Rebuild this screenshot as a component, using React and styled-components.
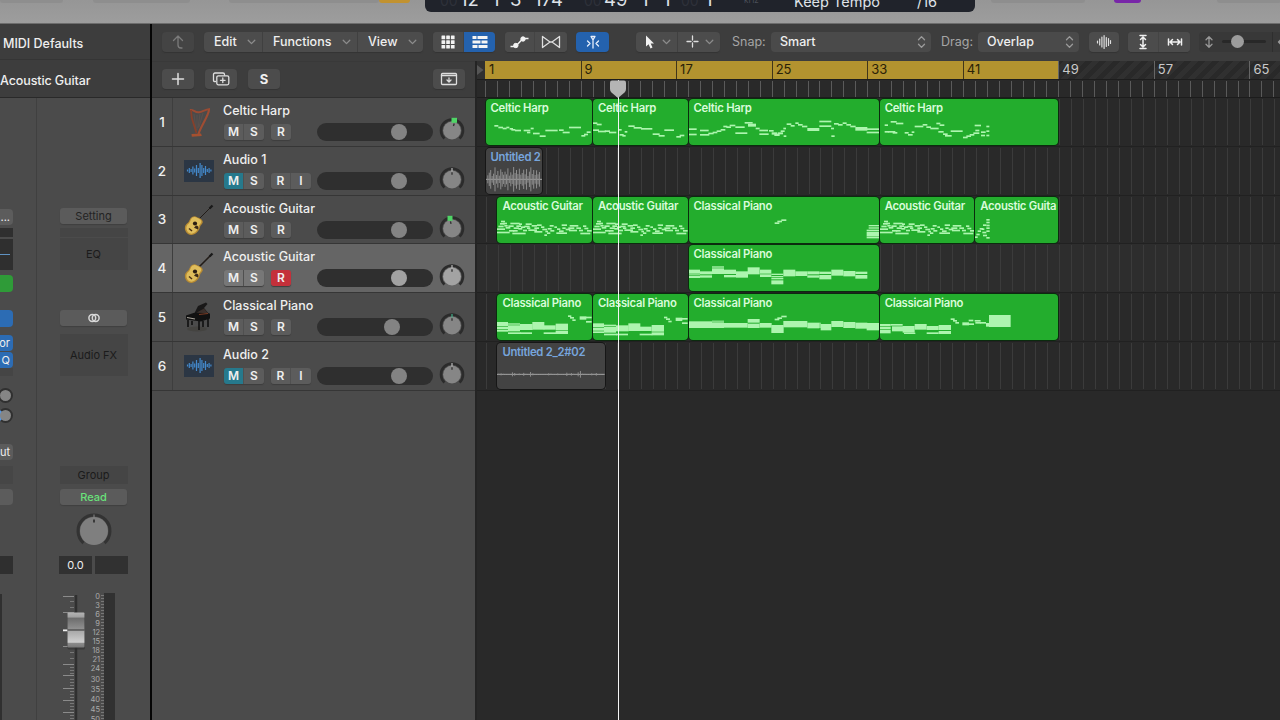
import React from "react";
import styled, { createGlobalStyle, css } from "styled-components";

const BAR = 11.945;
const LANE = 48.8;

/* note lists: [x, y, width, height], in thirds of a pixel */
const harpA = [
  [25, 78, 12], [37, 83, 14], [50, 86, 12], [61, 83, 9], [71, 87, 10], [76, 90, 12], [87, 92, 18],
  [113, 92, 20], [123, 98, 10], [134, 86, 9], [141, 101, 20], [161, 109, 18], [178, 92, 37],
  [219, 91, 14], [230, 98, 21], [249, 83, 36], [286, 108, 12], [294, 104, 12], [302, 97, 12],
];
const harpB = [
  [0, 70, 13], [11, 74, 15], [0, 91, 18], [15, 95, 24], [35, 94, 16], [48, 98, 22], [80, 105, 12],
  [88, 108, 10], [95, 96, 8], [106, 79, 19], [122, 84, 24], [144, 87, 34], [179, 103, 21],
  [197, 108, 18], [214, 91, 29], [250, 111, 14], [260, 107, 14], [78, 90, 8],
];
const harpC = [
  [0, 88, 23], [0, 104, 23], [33, 92, 26], [33, 105, 28], [58, 101, 16], [71, 98, 14], [83, 94, 14],
  [95, 90, 14], [103, 80, 12], [112, 82, 14], [122, 77, 17], [139, 82, 28], [139, 100, 36],
  [167, 69, 24], [177, 74, 24, 9], [200, 86, 12], [211, 92, 26], [211, 103, 28], [240, 93, 14],
  [248, 100, 16, 7], [256, 104, 16, 7], [266, 100, 16, 6], [275, 94, 12], [283, 86, 8], [284, 109, 8],
  [293, 73, 14], [305, 78, 12], [319, 70, 10], [327, 75, 14], [339, 80, 16], [355, 87, 36, 9],
  [391, 65, 36], [391, 79, 36], [426, 86, 9], [427, 109, 10], [435, 72, 14], [447, 75, 14],
  [461, 70, 12], [472, 75, 14], [484, 80, 16], [499, 84, 36, 11], [533, 88, 38], [533, 98, 38],
];
const harpD = [
  [14, 76, 10], [14, 96, 12], [32, 66, 18], [48, 71, 22], [24, 96, 22], [38, 99, 14], [74, 99, 12],
  [84, 105, 14], [95, 97, 8], [104, 80, 26], [128, 75, 14], [139, 82, 14], [151, 86, 25],
  [169, 71, 12], [179, 76, 14], [175, 96, 16], [189, 103, 14], [195, 108, 20], [212, 94, 36],
  [249, 113, 14], [259, 109, 14], [269, 105, 14], [280, 100, 18], [284, 77, 19], [286, 92, 12],
  [303, 97, 14], [303, 107, 12], [319, 80, 9], [319, 94, 9], [319, 107, 9],
];
const guitarA = [
  [0, 104, 38], [46, 107, 40], [0, 94, 24], [12, 71, 12], [9, 78, 14], [18, 77, 12], [4, 86, 16],
  [22, 84, 10], [26, 90, 14], [40, 77, 28], [34, 85, 16], [36, 99, 16], [50, 91, 16], [66, 79, 9],
  [58, 85, 14], [48, 99, 14], [64, 93, 12], [72, 88, 12], [78, 98, 12], [86, 79, 18], [82, 86, 16],
  [90, 91, 10], [104, 84, 16], [94, 97, 26], [112, 91, 14], [112, 102, 24], [120, 82, 14],
  [132, 88, 10], [136, 95, 14], [145, 101, 8], [142, 112, 8], [152, 93, 12], [150, 106, 10],
  [158, 84, 12], [160, 99, 12], [172, 88, 8], [180, 94, 10], [178, 106, 32], [186, 100, 14],
  [194, 82, 16], [196, 91, 10], [206, 95, 14], [218, 84, 16], [214, 91, 18], [216, 98, 24],
  [234, 84, 10], [238, 91, 14], [246, 98, 12], [250, 107, 30], [258, 85, 10], [262, 92, 12], [270, 99, 14],
];
const guitarB = [
  [34, 66, 10], [34, 74, 10], [34, 83, 10], [34, 91, 10], [34, 100, 10], [24, 82, 10], [14, 93, 10],
  [8, 100, 10], [4, 110, 10], [0, 118, 8], [22, 104, 12], [24, 113, 12], [34, 120, 10], [20, 94, 8],
];
const pianoTail = [
  [257, 76, 14], [265, 71, 14], [277, 67, 15],
  [539, 84, 32, 4], [539, 91, 32, 4], [533, 98, 38, 4], [533, 104, 38, 14], [533, 119, 38, 5],
];
const pianoA = [
  [0, 84, 33, 12], [0, 98, 33, 8], [0, 108, 33, 5], [33, 88, 36, 4], [33, 94, 36, 18], [33, 115, 38, 5],
  [69, 90, 38, 18], [69, 115, 36, 5], [106, 84, 36, 23], [140, 94, 36, 13], [140, 115, 38, 5],
  [176, 89, 37, 20], [176, 111, 37, 9], [213, 64, 10], [219, 69, 12], [226, 76, 10],
  [248, 67, 20, 10], [267, 68, 17, 5], [267, 81, 17, 5],
];
const pianoB = pianoA.map(([x, y, w, h]) => [x, y + 4, w, h]);
const pianoC = [
  [0, 82, 69, 20], [69, 80, 36, 3], [69, 85, 36, 17], [105, 87, 71, 14], [176, 75, 36, 11],
  [176, 89, 36, 13], [212, 87, 36, 14], [247, 93, 37, 24], [257, 74, 14], [265, 70, 14], [277, 65, 16],
  [283, 81, 72, 19], [355, 86, 36, 17], [391, 86, 4, 16], [395, 90, 32, 19], [427, 81, 36, 18],
  [463, 84, 36, 18], [499, 86, 36, 18], [533, 87, 38, 22],
];
const pianoD = [
  [0, 90, 32, 6], [0, 98, 32, 8], [0, 108, 32, 10], [32, 90, 36, 5], [36, 97, 34, 15], [68, 96, 36, 20],
  [72, 116, 34, 4], [104, 90, 36, 17], [140, 96, 36, 12], [140, 115, 36, 5], [176, 93, 37, 15],
  [176, 111, 37, 9], [212, 73, 12], [219, 78, 12], [226, 84, 11], [247, 85, 20, 9], [266, 77, 14],
  [266, 88, 16], [284, 78, 18, 5], [286, 84, 16], [300, 84, 18, 5], [318, 87, 14, 11], [327, 63, 65, 36],
];
const pianoE = [
  [0, 74, 33, 12], [0, 88, 33, 3], [0, 93, 33, 6], [33, 79, 36, 9], [33, 91, 36, 7], [69, 64, 36, 4],
  [69, 70, 36, 17], [105, 74, 36, 13], [105, 90, 36, 7], [141, 79, 36, 19], [176, 67, 36, 21],
  [213, 74, 34, 12], [213, 88, 34, 8], [247, 86, 36, 4], [247, 93, 36, 3], [247, 98, 36, 5],
  [247, 106, 36, 12], [283, 74, 36, 20], [319, 79, 36, 14], [355, 79, 36, 9], [355, 91, 36, 7],
  [391, 80, 36, 7], [391, 90, 36, 13], [427, 74, 36, 18], [463, 78, 36, 16], [499, 80, 36, 7],
  [499, 90, 36, 11],
];

const waveLoud = [24, 40, 56, 20, 34, 72, 26, 50, 22, 60, 44, 28, 46, 30, 66, 22, 42, 28, 74, 38, 56, 32, 64, 28, 38, 58, 30, 62, 20, 46, 72, 32, 56, 26, 54, 30, 44];
const waveSoft = [4, 6, 3, 2, 2, 2, 12, 8, 2, 5, 2, 9, 3, 2, 14, 6, 2, 2, 2, 2, 2, 2, 6, 4, 2, 2, 5, 2, 2, 2, 10, 4, 8, 3, 2, 12, 20, 4, 3, 2, 2, 6, 3, 8, 2, 2];

const lanes = [
  [
    { name: "Celtic Harp", at: 0, bars: 9, notes: harpA },
    { name: "Celtic Harp", at: 0, bars: 8, notes: harpB },
    { name: "Celtic Harp", at: 0, bars: 16, notes: harpC },
    { name: "Celtic Harp", at: 0, bars: 15, notes: harpD },
  ],
  [{ name: "Untitled 2", at: 0, bars: 4.8, wave: waveLoud, step: 4.3 }],
  [
    { name: "Acoustic Guitar", at: 1, bars: 8, notes: guitarA },
    { name: "Acoustic Guitar", at: 0, bars: 8, notes: guitarA },
    { name: "Classical Piano", at: 0, bars: 16, notes: pianoTail },
    { name: "Acoustic Guitar", at: 0, bars: 8, notes: guitarA },
    { name: "Acoustic Guita", at: 0, bars: 7, notes: guitarB },
  ],
  [{ name: "Classical Piano", at: 17, bars: 16, notes: pianoE }],
  [
    { name: "Classical Piano", at: 1, bars: 8, notes: pianoA },
    { name: "Classical Piano", at: 0, bars: 8, notes: pianoB },
    { name: "Classical Piano", at: 0, bars: 16, notes: pianoC },
    { name: "Classical Piano", at: 0, bars: 15, notes: pianoD },
  ],
  [{ name: "Untitled 2_2#02", at: 1, bars: 9.1, wave: waveSoft, step: 6.8 }],
];

const tracks = [
  { name: "Celtic Harp", icon: "harp", volume: 73, pan: 18 },
  { name: "Audio 1", icon: "audio", volume: 73, mute: true, input: true },
  { name: "Acoustic Guitar", icon: "guitar", volume: 73, pan: -12 },
  { name: "Acoustic Guitar", icon: "guitar", volume: 73, selected: true },
  { name: "Classical Piano", icon: "piano", volume: 66, tint: "#3fae87" },
  { name: "Audio 2", icon: "audio", volume: 73, mute: true, input: true },
];

const lcd = [
  ["00", true], ["12"], ["1"], ["3"], ["174"], ["00", true], ["49"], ["1"], ["1"], ["00", true], ["1"],
];

function Stroke({ w = 16, h = 16, width = 1.5, color = "#dedede", children }) {
  return (
    <svg width={w} height={h} viewBox={`0 0 ${w} ${h}`} fill="none" stroke={color} strokeWidth={width}
      strokeLinecap="round" strokeLinejoin="round">
      {children}
    </svg>
  );
}

const Chevron = () => (
  <Stroke w={9} h={6} width={1.3} color="#8b8b8b"><path d="M1.2 1.2 4.5 4.6 7.8 1.2" /></Stroke>
);

const UpDown = () => (
  <Stroke w={9} h={14} width={1.3} color="#9b9b9b"><path d="M1.5 4.8 4.5 1.6 7.5 4.8M1.5 9.2 4.5 12.4 7.5 9.2" /></Stroke>
);

function TrackIcon({ kind, selected }) {
  if (kind === "audio") {
    const bars = [2, 5, 3, 8, 4, 11, 5, 15, 11, 5, 9, 3, 5, 2];
    return (
      <svg width="32" height="32" viewBox="0 0 32 32">
        <rect x="2" y="5" width="30" height="22" fill="#2b3644" />
        <path stroke="#4389cc" strokeWidth="1.2"
          d={bars.map((b, i) => `M${5.5 + i * 1.8} ${15.5 - b / 2}v${b}`).join("")} />
      </svg>
    );
  }
  if (kind === "harp") {
    return (
      <svg width="32" height="32" viewBox="0 0 32 32" fill="none">
        <path d="M12 8l2 16M15 9l0 15M18 8l-2 14M21 7l-4 14" stroke="#6a5650" strokeWidth="0.5" />
        <path d="M8 4C11 3 13 7 17 6.300 21 5.500 23 3.500 28 3" stroke="#9a4b33" strokeWidth="2" />
        <path d="M27 3.500C27 9 19 20 16.500 28" stroke="#9f4d33" strokeWidth="2.100" />
        <path d="M9 4 9.800 12 14.500 27" stroke="#87402b" strokeWidth="1.800" />
        <path d="M9.500 28 19 27.500l.8 2.500-10 .8z" fill="#a5502f" />
      </svg>
    );
  }
  if (kind === "guitar") {
    return (
      <svg width="32" height="32" viewBox="0 0 32 32" fill="none">
        <path d="M14 18 28 4" stroke="#221c18" strokeWidth={selected ? 1.6 : 1} />
        <path d="M27.500 4.500 30.500 1.500" stroke="#191919" strokeWidth="2.300" />
        <path d="M10 13c3-2 5 0 6.500.8 3 1 5 3.200 4 5.200-1 2-2 2-2.500 4C17 28 11 33 6 30c-4-3-4-8-1-10.500C8 17.500 7 15 10 13z" fill="#b88b32" />
        <path d="M10.500 13.600c2.500-1.600 4-.1 5.500.6 2.500 1 4 2.800 3.200 4.400-1 1.800-2.200 2.400-2.700 4.400C15.500 27 11 31.500 7 29c-3.500-2.500-3.200-7-.8-9C9 18 8 15.400 10.500 13.600z" fill="#dfbd5c" />
        <path d="M14 21.500c2 0 3 1.500 2 4l-4-1.800z" fill="#3a2818" />
        <circle cx="13" cy="19.500" r="2.100" fill="#2b1d12" />
        <path d="M7 24.500 10 27" stroke="#4a2f17" strokeWidth="1.500" />
      </svg>
    );
  }
  return (
    <svg width="32" height="32" viewBox="0 0 32 32" fill="none">
      <ellipse cx="15" cy="28" rx="10" ry="2.500" fill="#444340" />
      <path d="M13 11 16 5 24 1.500l1.500 1.500L22 7l5 6-14-1z" fill="#191818" />
      <path d="M14 12 22 7.500l5 6-8 1.500z" fill="#3b302c" />
      <path d="M4 14.500 13 11.500l15 1v5l-9 3-15-2z" fill="#111" />
      <path d="M5 16.500 13 18" stroke="#a8a49b" strokeWidth="1.100" />
      <path d="M17 13.500l9-1" stroke="#7c3c25" strokeWidth="1.200" />
      <path d="M6 19v7M10 20v4M17 20v9M21 20v6M26 18v8" stroke="#0d0d0d" strokeWidth="1.500" />
    </svg>
  );
}

function PanKnob({ angle = 0, tint, bright }) {
  const moved = angle !== 0;
  return (
    <svg width="26" height="26" viewBox="0 0 26 26" fill="none">
      <path d="M5.500 21.500A11 11 0 1 1 20.500 21.500" stroke="#2b2b2b" strokeWidth="2.600" />
      <circle cx="13" cy="13.500" r="8.900" fill={bright ? "#a3a3a3" : "#868686"} />
      {moved && (
        <path d={angle > 0 ? "M12.500 0.800h5.500v5h-5.500z" : "M8.500 0.800h5v5h-5z"} fill="#4fd566" />
      )}
      <path d="M13 2v3.500" stroke={tint || (moved ? "none" : "#b9b9b9")} strokeWidth="1.200" />
      <path d="M13 6.200v2.600" stroke="#2e2e2e" strokeWidth="1.300" transform={`rotate(${angle} 13 13.500)`} />
    </svg>
  );
}

function Region({ region }) {
  const { name, at, bars, notes, wave, step } = region;
  const w = bars * BAR * 3 - 3;
  return (
    <RegionBox $at={at} $bars={bars} $audio={!!wave}>
      <RegionName $audio={!!wave}>{name}</RegionName>
      <NoteArt viewBox={`0 0 ${w} 138`} preserveAspectRatio="none">
        {notes && notes.map(([x, y, nw, nh = 5], i) => (
          <rect key={i} x={x} y={y} width={nw} height={nh} fill="#adf5af" />
        ))}
        {wave && (
          <>
            <path d={`M0 94H${w}`} stroke="#a9a9a9" strokeWidth="3" />
            {wave.map((v, i) => (
              <rect key={i} x={4 + i * step} y={94 - v / 2} width="3" height={v} fill="#8d8d8d" />
            ))}
          </>
        )}
      </NoteArt>
    </RegionBox>
  );
}

function Track({ track, number }) {
  const { name, icon, volume, pan, tint, mute, input, selected } = track;
  return (
    <TrackRow $selected={selected}>
      <TrackNumber>{number}</TrackNumber>
      <IconCell><TrackIcon kind={icon} selected={selected} /></IconCell>
      <TrackMain>
        <TrackName>{name}</TrackName>
        <Controls>
          <ButtonPair>
            <MiniButton $on={mute && "#26798c"} $lit={selected}>M</MiniButton>
            <MiniButton $lit={selected}>S</MiniButton>
          </ButtonPair>
          <ButtonPair>
            <MiniButton $on={selected && "#c4303a"}>R</MiniButton>
            {input && <MiniButton>I</MiniButton>}
          </ButtonPair>
        </Controls>
      </TrackMain>
      <Volume>
        <VolumeKnob style={{ marginLeft: `${(volume / 100) * 101}px` }} $lit={selected} />
      </Volume>
      <PanCell><PanKnob angle={pan} tint={tint} bright={selected} /></PanCell>
    </TrackRow>
  );
}

function Toolbar() {
  return (
    <ToolbarRow>
      <Tool $w={32} $gap={10} $dim>
        <Stroke color="#7b7b7b" width={1.300}><path d="M3.500 6.500 8 2 12.500 6.500M8 2v9q0 3 3 3h1" /></Stroke>
      </Tool>
      <Group $gap={10}>
        <Menu $w={59}>Edit<Chevron /></Menu>
        <Menu $w={95}>Functions<Chevron /></Menu>
        <Menu $w={65}>View<Chevron /></Menu>
      </Group>
      <Group $gap={10}>
        <Seg $w={31}>
          <svg width="14" height="14" viewBox="0 0 14 14" fill="#f2f2f2">
            {[0.5, 5.2, 9.9].map((y) => [0.5, 5.2, 9.9].map((x) => (
              <rect key={`${x}-${y}`} x={x} y={y} width="3.700" height="3.700" rx="0.500" />
            )))}
          </svg>
        </Seg>
        <Seg $w={31} $active>
          <svg width="16" height="14" viewBox="0 0 16 14" fill="#f4f4f4">
            <path d="M0.500 1h4v3h-4zM5.500 1h10v3h-10zM0.500 5.500h8v3h-8zM9.500 5.500h6v3h-6zM0.500 10h5v3h-5zM6.500 10h9v3h-9z" />
          </svg>
        </Seg>
      </Group>
      <Group $gap={9}>
        <Seg $w={30}>
          <svg width="19" height="14" viewBox="0 0 19 14" fill="#f2f2f2" stroke="#f2f2f2">
            <path d="M0.500 11.500H5.500L13 3.500H18.500" fill="none" strokeWidth="1.500" />
            <circle cx="5.800" cy="10.500" r="2.200" /><circle cx="13" cy="4" r="2.200" />
          </svg>
        </Seg>
        <Seg $w={32}>
          <Stroke w={20} h={14} width={1.300}><path d="M1.500 1.500V12.500L9 7ZM18.500 1.500V12.500L11 7ZM9 7h2" /></Stroke>
        </Seg>
      </Group>
      <Tool $w={33} $gap={27} $active>
        <Stroke w={16} h={16} width={1.300} color="#e6eefc">
          <path d="M6 2.500h4L8 6ZM8 5v9M2.500 7 5 9.500 2.500 12M13.500 7 11 9.500 13.500 12" />
        </Stroke>
      </Tool>
      <Group $gap={12}>
        <Menu $w={42} $tight>
          <svg width="12" height="16" viewBox="0 0 12 16" fill="#f2f2f2"><path d="M2 1.500V12.500L4.600 10.200 6.500 14.500 8.500 13.600 6.700 9.500H10Z" /></svg>
          <Chevron />
        </Menu>
        <Menu $w={42} $tight>
          <Stroke w={13} h={13} width={1.300}><path d="M6.500 1v4M6.500 8v4M1 6.500h4M8 6.500h4" /></Stroke>
          <Chevron />
        </Menu>
      </Group>
      <Label $w={39}>Snap:</Label>
      <Select $w={160} $gap={10}>Smart<UpDown /></Select>
      <Label $w={37}>Drag:</Label>
      <Select $w={101} $gap={10}>Overlap<UpDown /></Select>
      <Tool $w={30} $gap={9}>
        <Stroke w={16} h={16} width={1.200}><path d="M1.500 7v2M3.700 5v6M5.900 3v10M8.100 1.500v13M10.300 3.500v9M12.500 4.500v7M14.500 6.500v3" /></Stroke>
      </Tool>
      <Group $gap={9}>
        <Seg $w={31}>
          <Stroke width={1.500} color="#f0f0f0"><path d="M5 1.500h6M5 14.500h6M8 3v10M5.500 5.500 8 3l2.500 2.500M5.500 10.500 8 13l2.500-2.500" /></Stroke>
        </Seg>
        <Seg $w={31}>
          <Stroke width={1.500} color="#f0f0f0"><path d="M1.500 5v6M14.500 5v6M3 8h10M5.500 5.500 3 8l2.500 2.500M10.500 5.500 13 8l-2.500 2.500" /></Stroke>
        </Seg>
      </Group>
      <ZoomStrip>
        <Stroke w={10} h={14} width={1.300} color="#989898"><path d="M5 2v10M2 4.700 5 1.700 8 4.700M2 9.300 5 12.300 8 9.300" /></Stroke>
        <ZoomTrack><ZoomKnob /></ZoomTrack>
      </ZoomStrip>
      <ZoomNext>
        <Stroke w={10} h={14} width={1.300} color="#989898"><path d="M8 7H2M4 4.500 1.500 7 4 9.500" /></Stroke>
      </ZoomNext>
    </ToolbarRow>
  );
}

function Fader() {
  const major = [2, 18, 35, 52, 70, 81, 94, 106, 118];
  const minor = [7, 13, 58, 64, 73, 76, 79, 85, 88, 91, 97, 100, 103, 109, 112, 115, 121, 124];
  return (
    <svg width="26" height="128" viewBox="0 0 26 128">
      <defs>
        <linearGradient id="cap" x1="0" x2="0" y1="0" y2="1">
          <stop offset="0" stopColor="#b5b5b5" />
          <stop offset="0.130" stopColor="#a0a0a0" />
          <stop offset="0.160" stopColor="#6d6d6d" />
          <stop offset="0.480" stopColor="#929292" />
          <stop offset="0.520" stopColor="#a8a8a8" />
          <stop offset="0.850" stopColor="#cfcfcf" />
          <stop offset="0.880" stopColor="#8b8b8b" />
          <stop offset="1" stopColor="#777" />
        </linearGradient>
      </defs>
      <path d={major.map((y) => `M1 ${y + 0.5}h11`).join("")} stroke="#8b8b8b" />
      <path d={minor.map((y) => `M8 ${y + 0.5}h4`).join("")} stroke="#777" />
      <path d="M14 1V128" stroke="#303030" strokeWidth="2.500" />
      <path d="M1 36.500h5" stroke="#f0f0f0" strokeWidth="1.500" />
      <rect x="5.500" y="19" width="17.500" height="36.500" rx="1.500" fill="#303030" opacity="0.600" />
      <rect x="5.500" y="18.500" width="17" height="35" rx="1" fill="url(#cap)" />
      <path d="M5.500 36h17" stroke="#333" />
    </svg>
  );
}

function Inspector() {
  return (
    <InspectorPane>
      <InspectorTitle $h={36}>MIDI Defaults</InspectorTitle>
      <InspectorTitle $h={38} $flush>Acoustic Guitar</InspectorTitle>
      <Strips>
        <CutStrip>
          <Slot $top={111} $h={16} $tone="#5c5c5c">...</Slot>
          <Slot $top={3} $h={9} $tone="#2f2f2f" $square />
          <Slot $top={2} $h={31} $tone="#2f2f2f" $square><EqLine /></Slot>
          <Slot $top={5} $h={17} $tone="#2f9b38" />
          <Slot $top={18} $h={17} $tone="#2c6cb4" />
          <Slot $top={8} $h={16} $tone="#2c6cb4">or</Slot>
          <Slot $top={1} $h={16} $tone="#2c6cb4">Q</Slot>
          <Slot $h={8} $tone="#454545" $square />
          <SendKnob $top={12} />
          <SendKnob $top={5} $blue />
          <Slot $top={21} $h={16} $tone="#5c5c5c">ut</Slot>
          <Slot $top={6} $h={18} $tone="#464646" $square />
          <Slot $top={5} $h={16} $tone="#5c5c5c" />
          <Slot $top={51} $h={18} $tone="#2f2f2f" $square />
          <CutMeter />
        </CutStrip>
        <Strip>
          <StripButton $top={110}>Setting</StripButton>
          <Well $top={4} $h={9} />
          <Well $top={1} $h={32}>EQ</Well>
          <StripButton $top={40}>
            <Stroke w={14} h={10} width={1.500} color="#d8d8d8"><circle cx="5.300" cy="5" r="3.400" /><circle cx="8.700" cy="5" r="3.400" /></Stroke>
          </StripButton>
          <Well $top={8} $h={42}>Audio FX</Well>
          <Well $top={90} $h={18}>Group</Well>
          <StripButton $top={5} $green>Read</StripButton>
          <svg width="36" height="36" viewBox="0 0 36 36" fill="none">
            <path d="M7.500 30A16 16 0 1 1 28.500 30" stroke="#333" strokeWidth="3" />
            <circle cx="18" cy="18" r="14" fill="#7f7f7f" />
            <path d="M18 1.500v3" stroke="#888" />
            <path d="M18 6.500v3" stroke="#222" strokeWidth="1.500" />
          </svg>
          <Values><ValueBox>0.0</ValueBox><ValueBox /></Values>
          <FaderRow>
            <Fader />
            <Scale>
              {[0, 3, 6, 9, 12, 15, 18, 21, 24].map((n) => <ScaleMark key={n} $h={8.97}>{n}</ScaleMark>)}
              {[30, 35, 40, 45, 50].map((n) => <ScaleMark key={n} $h={10.1} $low>{n}</ScaleMark>)}
            </Scale>
            <Ticks /><Meter />
          </FaderRow>
        </Strip>
      </Strips>
    </InspectorPane>
  );
}

export default function App() {
  return (
    <>
      <GlobalStyle />
      <Screen>
        <TopBar>
          <Pill $w={63} /><Pill $w={97} $gap={30} /><Pill $w={150} $gap={39} />
          <Pill $w={31} $tone="#c19230" />
          <Lcd>
            {lcd.map(([text, dim], i) => <Digit key={i} $dim={dim}>{text}</Digit>)}
            <LcdSmall $dim>kHz</LcdSmall>
            <LcdSmall>Keep Tempo</LcdSmall>
            <LcdSmall>/16</LcdSmall>
          </Lcd>
          <Pill $w={94} $gap={16} /><Pill $w={27} $gap={29} $tone="#7826a8" /><Pill $w={64} $gap={76} />
        </TopBar>
        <Body>
          <Inspector />
          <Workspace>
            <Toolbar />
            <Panes>
              <TrackPane>
                <TrackTools>
                  <Tool $w={32} $gap={11}><Stroke><path d="M8 2.500v11M2.500 8h11" /></Stroke></Tool>
                  <Tool $w={32} $gap={11}>
                    <Stroke w={18} width={1.300}>
                      <path d="M3.500 10.500h-1q-1 0-1-1v-6q0-1.500 1.500-1.500h8q1.500 0 1.500 1.500v.5" />
                      <rect x="4.800" y="4.800" width="12" height="9" rx="1.500" /><path d="M10.800 7v4.600M8.500 9.300h4.600" />
                    </Stroke>
                  </Tool>
                  <Tool $w={32} $gap={153}><Solo>S</Solo></Tool>
                  <Tool $w={32}>
                    <Stroke w={18} width={1.300}>
                      <rect x="1.500" y="2.500" width="15" height="11" rx="1" /><path d="M1.500 4.500h15M9 6.800v4M7 9l2 2 2-2" />
                    </Stroke>
                  </Tool>
                </TrackTools>
                {tracks.map((t, i) => <Track key={i} track={t} number={i + 1} />)}
              </TrackPane>
              <Arrange>
                <Ruler>
                  <RulerEdge><svg width="7" height="10" viewBox="0 0 7 10"><path d="M0 0 6.500 5 0 10Z" fill="#555" /></svg></RulerEdge>
                  {[1, 9, 17, 25, 33, 41, 49, 57, 65].map((n) => <BarMark key={n} $cycle={n < 49} $first={n === 1}>{n}</BarMark>)}
                </Ruler>
                <BeatTicks />
                {lanes.map((regions, i) => (
                  <Lane key={i} $selected={i === 3}>
                    {regions.map((r, j) => <Region key={j} region={r} />)}
                  </Lane>
                ))}
                <Playhead>
                  <svg width="18" height="18" viewBox="0 0 18 18">
                    <path d="M3 .5h12q2 0 2 2V9q0 2-1.500 3.500L9 18 2.500 12.500Q1 11 1 9V2.500q0-2 2-2Z" fill="#b4b4b4" />
                  </svg>
                </Playhead>
              </Arrange>
            </Panes>
          </Workspace>
        </Body>
      </Screen>
    </>
  );
}

const GlobalStyle = createGlobalStyle`
  * { box-sizing: border-box; }
  body {
    margin: 0;
    overflow: hidden;
    background: #2a2a2a;
    font-family: Inter, "Liberation Sans", sans-serif;
  }
  svg { display: block; flex: none; }
`;

const Screen = styled.div`
  width: 1280px;
  height: 720px;
  overflow: hidden;
  color: #efefef;
`;

const TopBar = styled.header`
  display: flex;
  align-items: flex-start;
  height: 24px;
  overflow: hidden;
  background: linear-gradient(#969696, #9d9d9d);
  border-bottom: 1px solid #6d6d6d;
`;

const Pill = styled.div`
  flex: none;
  width: ${(p) => p.$w}px;
  height: 3px;
  margin-left: ${(p) => p.$gap || 0}px;
  border-radius: 0 0 5px 5px;
  background: ${(p) => p.$tone || "#8e8e8e"};
`;

const Lcd = styled.div`
  display: grid;
  grid-template-columns: 20px 32px 18px 24px 50px 20px 37px 22px 18px 24px 39px 50px 123px 30px;
  grid-template-rows: 12px;
  align-items: end;
  flex: none;
  width: 550px;
  height: 12px;
  margin-left: 15px;
  padding-left: 15px;
  overflow: hidden;
  border-radius: 0 0 6px 6px;
  background: #20232b;
  white-space: nowrap;
`;

const Digit = styled.span`
  height: 24px;
  line-height: ${(p) => (p.$dim ? 26 : 23)}px;
  font-size: ${(p) => (p.$dim ? 14 : 18.5)}px;
  color: ${(p) => (p.$dim ? "#2e313a" : "#dfe2e8")};
`;

const LcdSmall = styled.span`
  height: 21px;
  line-height: ${(p) => (p.$dim ? 19 : 21)}px;
  font-size: ${(p) => (p.$dim ? 8 : 14.5)}px;
  color: ${(p) => (p.$dim ? "#4b4f59" : "#dfe2e8")};
`;

const Body = styled.div`
  display: flex;
  height: 696px;
`;

const InspectorPane = styled.aside`
  flex: none;
  width: 152px;
  overflow: hidden;
  border-right: 2px solid #050505;
  background: #4b4b4b;
`;

const InspectorTitle = styled.div`
  display: flex;
  align-items: center;
  height: ${(p) => p.$h}px;
  padding-top: 3px;
  padding-left: ${(p) => (p.$flush ? 0 : 3)}px;
  border-bottom: 1px solid ${(p) => (p.$flush ? "#292929" : "#353535")};
  background: #3d3d3d;
  font-size: 12.5px;
  font-weight: 500;
  letter-spacing: ${(p) => (p.$flush ? -0.1 : 0)}px;
  white-space: nowrap;
`;

const Strips = styled.div`
  display: flex;
  height: 622px;
`;

const CutStrip = styled.div`
  flex: none;
  width: 37px;
  border-right: 1px solid #404040;
`;

const Slot = styled.div`
  display: flex;
  align-items: center;
  justify-content: flex-end;
  width: 13px;
  height: ${(p) => p.$h}px;
  margin-top: ${(p) => p.$top || 0}px;
  padding-right: 3px;
  border-radius: ${(p) => (p.$square ? 0 : "0 4px 4px 0")};
  background: ${(p) => p.$tone};
  font-size: 11px;
  overflow: hidden;
`;

const EqLine = styled.div`
  flex: none;
  width: 10px;
  height: 1px;
  background: #5f92c2;
`;

const SendKnob = styled.div`
  width: 15px;
  height: 15px;
  margin: ${(p) => p.$top}px 0 0 -2px;
  border: 2px solid #303030;
  border-left-color: ${(p) => (p.$blue ? "#5599e8" : "#303030")};
  border-radius: 50%;
  background: #858585;
`;

const CutMeter = styled.div`
  width: 2px;
  height: 130px;
  margin-top: 20px;
  background: #303030;
`;

const Strip = styled.div`
  display: flex;
  flex-direction: column;
  align-items: center;
  flex: 1;

  > svg { margin-top: 8px; }
`;

const StripButton = styled.div`
  display: flex;
  align-items: center;
  justify-content: center;
  flex: none;
  width: 67px;
  height: 16px;
  margin-top: ${(p) => p.$top}px;
  border-radius: 3px;
  background: #5b5b5b;
  box-shadow: 0 1px 1px #404040;
  color: ${(p) => (p.$green ? "#69e27a" : "#232323")};
  font-size: 11px;
  font-weight: ${(p) => (p.$green ? 500 : 400)};
`;

const Well = styled.div`
  display: flex;
  align-items: center;
  justify-content: center;
  flex: none;
  width: 68px;
  height: ${(p) => p.$h}px;
  margin-top: ${(p) => p.$top}px;
  background: #454545;
  color: #1b1b1b;
  font-size: 11px;
`;

const Values = styled.div`
  display: flex;
  flex: none;
  gap: 3px;
  margin-top: 7px;
`;

const ValueBox = styled.div`
  width: 33px;
  height: 18px;
  background: #313131;
  font-size: 11px;
  line-height: 18px;
  text-align: center;
`;

const FaderRow = styled.div`
  display: flex;
  width: 69px;
  margin-top: 20px;
  padding-left: 3px;
`;

const Scale = styled.div`
  width: 12px;
  font-size: 7.5px;
  color: #aaa;
  text-align: right;
`;

const ScaleMark = styled.div`
  height: ${(p) => p.$h}px;
  line-height: 5px;
  padding-top: ${(p) => (p.$low ? 2 : 0)}px;
`;

const Ticks = styled.div`
  width: 3px;
  height: 128px;
  margin: 1px 0 0 1px;
  background: repeating-linear-gradient(#777 0 1px, transparent 1px 3px);
`;

const Meter = styled.div`
  width: 11px;
  height: 130px;
  margin-top: -1px;
  background: #313131;
`;

const Workspace = styled.main`
  display: flex;
  flex-direction: column;
  flex: 1;
  min-width: 0;
  background: #3d3d3d;
`;

const ToolbarRow = styled.div`
  display: flex;
  align-items: center;
  flex: none;
  height: 37px;
  padding: 0 0 2px 10px;
  overflow: hidden;
`;

const face = css`
  background: ${(p) => (p.$active ? "#2462ae" : p.$dim ? "#444" : "#4c4c4c")};
`;

const Tool = styled.div`
  display: flex;
  align-items: center;
  justify-content: center;
  flex: none;
  width: ${(p) => p.$w}px;
  height: 20px;
  margin-right: ${(p) => p.$gap || 0}px;
  border-radius: 4px;
  box-shadow: 0 1px 1px #343434;
  ${face}
`;

const Group = styled.div`
  display: flex;
  flex: none;
  height: 20px;
  margin-right: ${(p) => p.$gap}px;
  overflow: hidden;
  border-radius: 4px;
  background: #4c4c4c;
  box-shadow: 0 1px 1px #343434;
`;

const Menu = styled.div`
  display: flex;
  align-items: center;
  justify-content: space-between;
  width: ${(p) => p.$w}px;
  padding: 0 ${(p) => (p.$tight ? "6px 0 8px" : "6px 0 10px")};
  border-right: 1px solid #404040;
  font-size: 12.5px;
  font-weight: 500;

  &:last-child { border-right: 0; }
`;

const Seg = styled.div`
  display: flex;
  align-items: center;
  justify-content: center;
  width: ${(p) => p.$w}px;
  border-right: 1px solid #444;
  ${face}

  &:last-child { border-right: 0; }
`;

const Label = styled.span`
  flex: none;
  width: ${(p) => p.$w}px;
  color: #a5a5a5;
  font-size: 12.5px;
`;

const Select = styled.div`
  display: flex;
  align-items: center;
  justify-content: space-between;
  flex: none;
  width: ${(p) => p.$w}px;
  height: 20px;
  margin-right: ${(p) => p.$gap}px;
  padding: 0 5px 0 9px;
  border-radius: 4px;
  background: #4a4a4a;
  font-size: 12.5px;
  font-weight: 500;
`;

const ZoomStrip = styled.div`
  display: flex;
  align-items: center;
  flex: none;
  width: 74px;
  height: 20px;
  padding-left: 5px;
  border-right: 1px solid #2e2e2e;
  border-radius: 4px 0 0 4px;
  background: #383838;
`;

const ZoomTrack = styled.div`
  display: flex;
  align-items: center;
  width: 44px;
  height: 3px;
  margin-left: 8px;
  padding-left: 9px;
  border-radius: 2px;
  background: #282828;
`;

const ZoomKnob = styled.div`
  width: 13px;
  height: 13px;
  border-radius: 50%;
  background: #9c9c9c;
`;

const ZoomNext = styled.div`
  display: flex;
  align-items: center;
  flex: none;
  width: 20px;
  height: 20px;
  padding-left: 4px;
  background: #383838;
`;

const Panes = styled.div`
  display: flex;
  flex: 1;
`;

const TrackPane = styled.section`
  flex: none;
  width: 325px;
  border-right: 2px solid #242424;
  background: #4b4b4b;
`;

const TrackTools = styled.div`
  display: flex;
  align-items: center;
  height: 37px;
  padding: 0 0 1px 10px;
  border-top: 1px solid #393939;
  border-bottom: 1px solid #303030;
  background: #3d3d3d;
`;

const Solo = styled.b`
  font-size: 13px;
  font-weight: 700;
`;

const TrackRow = styled.div`
  display: grid;
  grid-template-columns: 21px 50px 94px 116px 1fr;
  height: ${LANE}px;
  border-bottom: 1px solid #363636;
  background: ${(p) => (p.$selected ? "#656565" : "#4b4b4b")};
`;

const TrackNumber = styled.div`
  display: flex;
  align-items: center;
  justify-content: center;
  border-right: 1px solid #3e3e3e;
  font-size: 13.5px;
  font-weight: 500;
`;

const IconCell = styled.div`
  padding: 8px 0 0 9px;
`;

const TrackMain = styled.div`
  white-space: nowrap;
`;

const TrackName = styled.div`
  height: 26px;
  line-height: 25px;
  font-size: 12.5px;
  font-weight: 500;
`;

const Controls = styled.div`
  display: flex;
  gap: 7px;
  padding-left: 1px;
`;

const ButtonPair = styled.div`
  display: flex;
  overflow: hidden;
  border-radius: 3px;
  box-shadow: 0 1px 1px #3d3d3d;
`;

const MiniButton = styled.div`
  width: 20px;
  height: 16px;
  border-right: 1px solid #505050;
  background: ${(p) => p.$on || (p.$lit ? "#777" : "#5c5c5c")};
  font-size: 12px;
  font-weight: 600;
  line-height: 16px;
  text-align: center;

  &:last-child { border-right: 0; }
`;

const Volume = styled.div`
  display: flex;
  align-items: center;
  height: 18px;
  margin-top: 25px;
  border-radius: 9px;
  background: #2f2f2f;
`;

const VolumeKnob = styled.div`
  width: 16px;
  height: 16px;
  border-radius: 50%;
  background: ${(p) => (p.$lit ? "#a2a2a2" : "#838383")};
`;

const PanCell = styled.div`
  padding: 19px 0 0 6px;
`;

const Arrange = styled.section`
  position: relative;
  flex: 1;
  min-width: 0;
  overflow: hidden;
  background: #292929;
`;

const Ruler = styled.div`
  display: flex;
  height: 19px;
  background: repeating-linear-gradient(135deg, #292929 0 5px, #303030 5px 10px);
  border-bottom: 1px solid #1d1d1d;
`;

const RulerEdge = styled.div`
  display: flex;
  align-items: center;
  flex: none;
  width: 8px;
  background: #303030;
`;

const BarMark = styled.div`
  flex: none;
  width: ${BAR * 8}px;
  padding-left: 3px;
  border-left: 1px solid ${(p) => (p.$first ? "#b3932f" : p.$cycle ? "#40351a" : "#666")};
  background: ${(p) => (p.$cycle ? "#b3932f" : "transparent")};
  color: ${(p) => (p.$cycle ? "#2a2208" : "#c9c9c9")};
  font-size: 13px;
  line-height: 16px;
`;

const BeatTicks = styled.div`
  height: 18px;
  padding: 1px 0 0 8px;
  border-bottom: 1px solid #1c1c1c;
  background: repeating-linear-gradient(90deg, #5a5a5a 0 1px, transparent 1px ${BAR}px) content-box no-repeat, #292929;
`;

const Lane = styled.div`
  display: flex;
  height: ${LANE}px;
  padding: 1px 0 1px 8.5px;
  border-bottom: 1px solid #212121;
  background:
    repeating-linear-gradient(90deg, #3b3b3b 0 1px, transparent 1px ${BAR}px) content-box no-repeat,
    ${(p) => (p.$selected ? "#2d2d2d" : "#292929")};
`;

const RegionBox = styled.div`
  display: grid;
  flex: none;
  width: ${(p) => p.$bars * BAR - 1}px;
  height: 46px;
  margin: 0 1px 0 ${(p) => p.$at * BAR}px;
  overflow: hidden;
  border-radius: 4px;
  background: ${(p) => (p.$audio ? "#434343" : "#23ad2d")};
  box-shadow: 0 0 0 1px ${(p) => (p.$audio ? "#161616" : "#0b2b0e")};
`;

const RegionName = styled.div`
  grid-area: 1 / 1;
  padding-left: 5px;
  color: ${(p) => (p.$audio ? "#77a5dc" : "#d9fbda")};
  font-size: 11.3px;
  font-weight: 600;
  letter-spacing: -0.27px;
  line-height: 18px;
  white-space: nowrap;
`;

const NoteArt = styled.svg`
  grid-area: 1 / 1;
  width: 100%;
  height: 46px;
`;

const Playhead = styled.div`
  position: absolute;
  top: 19px;
  left: 132px;
  width: 18px;
  height: 660px;
  background: linear-gradient(90deg, transparent 9px, #f4f4f4 9px 10.3px, transparent 10.3px);
`;
